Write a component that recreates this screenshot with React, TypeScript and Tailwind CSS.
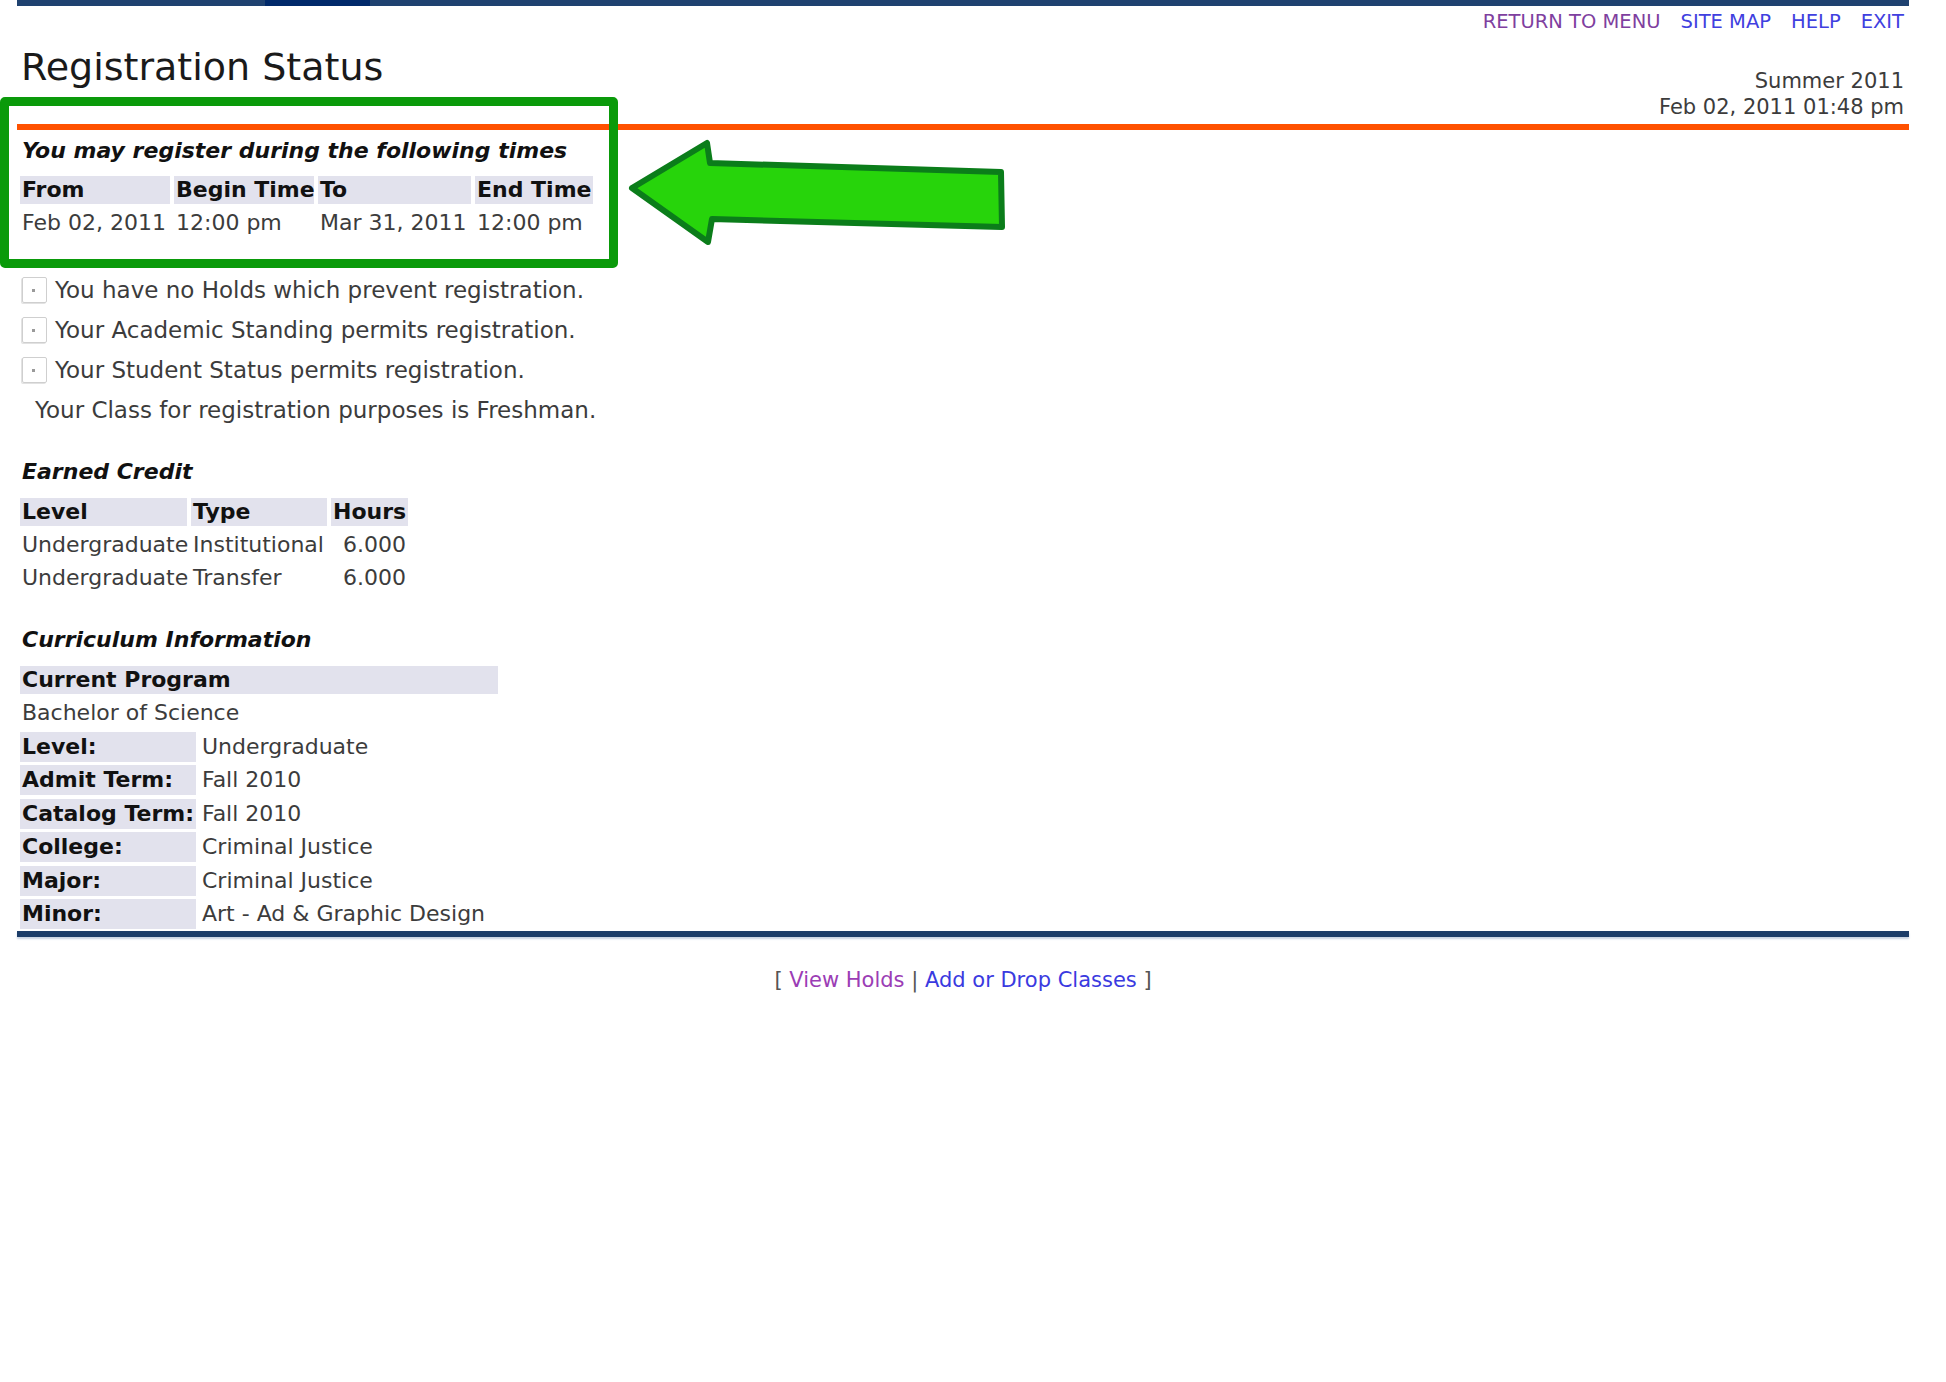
const headCell = 'flex h-[28px] items-center bg-[#e2e2ed] px-[2px] font-bold whitespace-nowrap text-[#111]';
const dataCell = 'flex h-[28px] items-center px-[2px] whitespace-nowrap';

function BrokenIcon() {
  return (
    <div className="relative h-[26px] w-[25px] rounded-[2px] border border-[#cfcfcf] shadow-[-1px_1px_0_#e2e2e2]">
      <div className="absolute left-[9px] top-[11px] h-[3px] w-[3px] bg-[#9a9a9a]" />
    </div>
  );
}

const CURRICULUM = [
  ['Level:', 'Undergraduate'],
  ['Admit Term:', 'Fall 2010'],
  ['Catalog Term:', 'Fall 2010'],
  ['College:', 'Criminal Justice'],
  ['Major:', 'Criminal Justice'],
  ['Minor:', 'Art - Ad & Graphic Design'],
];

export default function App() {
  return (
    <div className="relative min-h-[1382px] w-full bg-white font-['DejaVu_Sans',sans-serif] text-[22px] leading-none text-[#3c3c3c]">
      <div className="ml-[17px] w-[1892px]">
        {/* top bar */}
        <div className="flex h-[6px] bg-[#1f4270]">
          <div className="ml-[248px] h-full w-[105px] bg-[#00296a]" />
        </div>
        <nav className="flex h-[32px] items-center justify-end gap-[20px] pr-[5px] text-[19.5px]">
          <a className="text-[#7f3f9f]">RETURN TO MENU</a>
          <a className="text-[#4040e0]">SITE MAP</a>
          <a className="text-[#4040e0]">HELP</a>
          <a className="text-[#4040e0]">EXIT</a>
        </nav>

        <header className="flex h-[86px] justify-between">
          <h1 className="pl-[4px] pt-[7px] text-[38px] leading-[44px] font-normal text-[#1a1a1a]">Registration Status</h1>
          <div className="pr-[5px] pt-[30px] text-right text-[21px] leading-[26px]">
            <div>Summer 2011</div>
            <div>Feb 02, 2011 01:48 pm</div>
          </div>
        </header>
        <div className="h-[6px] bg-[#ff5100]" />

        <main className="pl-[3px]">
          <h2 className="mt-[7px] flex h-[28px] items-center px-[2px] font-bold italic text-[#111]">
            You may register during the following times
          </h2>
          <div className="mt-[11px] grid grid-cols-[150px_140px_153px_118px] gap-x-[4px] gap-y-[5px]">
            <div className={headCell}>From</div>
            <div className={headCell}>Begin Time</div>
            <div className={headCell}>To</div>
            <div className={headCell}>End Time</div>
            <div className={dataCell}>Feb 02, 2011</div>
            <div className={dataCell}>12:00 pm</div>
            <div className={dataCell}>Mar 31, 2011</div>
            <div className={dataCell}>12:00 pm</div>
          </div>

          <ul className="mt-[33px] text-[23px]">
            {[
              'You have no Holds which prevent registration.',
              'Your Academic Standing permits registration.',
              'Your Student Status permits registration.',
            ].map((t) => (
              <li key={t} className="flex h-[40px] items-center gap-[8px] pl-[2px]">
                <BrokenIcon />
                <span>{t}</span>
              </li>
            ))}
            <li className="flex h-[40px] items-center pl-[15px]">Your Class for registration purposes is Freshman.</li>
          </ul>

          <h2 className="mt-[28px] flex h-[28px] items-center px-[2px] font-bold italic text-[#111]">Earned Credit</h2>
          <div className="mt-[12px] grid grid-cols-[167px_136px_77px] gap-x-[4px] gap-y-[5px]">
            <div className={headCell}>Level</div>
            <div className={headCell}>Type</div>
            <div className={headCell}>Hours</div>
            <div className={dataCell}>Undergraduate</div>
            <div className={dataCell}>Institutional</div>
            <div className={dataCell + ' justify-end'}>6.000</div>
            <div className={dataCell}>Undergraduate</div>
            <div className={dataCell}>Transfer</div>
            <div className={dataCell + ' justify-end'}>6.000</div>
          </div>

          <h2 className="mt-[34px] flex h-[28px] items-center px-[2px] font-bold italic text-[#111]">Curriculum Information</h2>
          <div className="mt-[12px] w-[478px]">
            <div className={headCell}>Current Program</div>
            <div className={dataCell + ' mt-[5px]'}>Bachelor of Science</div>
            <div className="mt-[5px] grid grid-cols-[176px_298px] gap-x-[4px] gap-y-[3.4px]">
              {CURRICULUM.map(([k, v]) => (
                <div key={k} className="contents">
                  <div className="flex h-[30px] items-center bg-[#e2e2ed] px-[2px] font-bold text-[#111]">{k}</div>
                  <div className="flex h-[30px] items-center px-[2px] whitespace-nowrap">{v}</div>
                </div>
              ))}
            </div>
          </div>
        </main>

        <div className="mt-[2px] h-[6px] bg-[#1c3d69] shadow-[0_2px_2px_#c9d3e2]" />

        <footer className="mt-[30px] flex h-[28px] items-center justify-center text-[21px] text-[#555]">
          <span>[&nbsp;</span>
          <a className="text-[#9b3db5]">View Holds</a>
          <span>&nbsp;|&nbsp;</span>
          <a className="text-[#3a3ae0]">Add or Drop Classes</a>
          <span>&nbsp;]</span>
        </footer>
      </div>

      {/* annotation overlay */}
      <div className="absolute left-0 top-[97px] h-[171px] w-[618px] rounded-[5px] border-[9px] border-[#0a9a0a]" />
      <svg className="absolute left-[620px] top-[130px]" width="400" height="125" viewBox="0 0 400 125">
        <polygon
          points="12,58 87,13 90,33 381,42 382,97 92,89 88,112"
          fill="#27d40b"
          stroke="#0b7d1a"
          strokeWidth="6"
          strokeLinejoin="round"
        />
      </svg>
    </div>
  );
}
